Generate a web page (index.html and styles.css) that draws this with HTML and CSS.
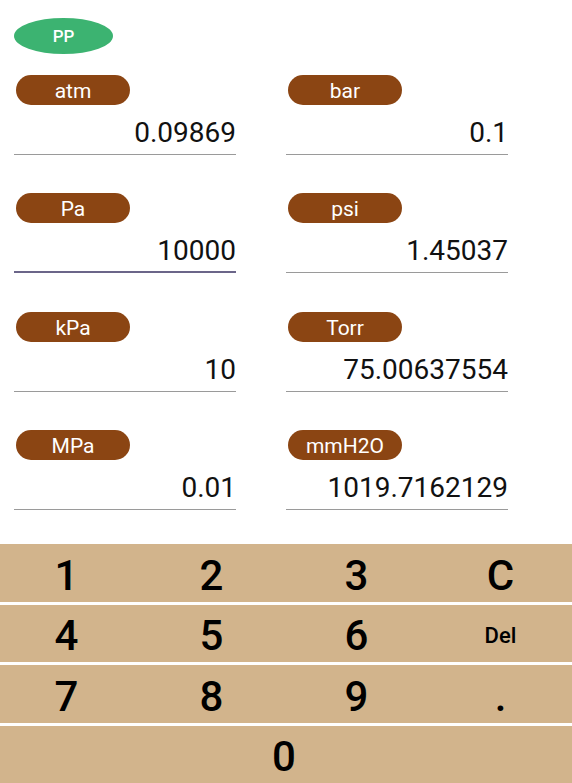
FILE: index.html
```html
<!DOCTYPE html>
<html>
<head>
    <title>Pressure Converter</title>
    <meta charset="UTF-8">
    <link rel="stylesheet" href="styles.css">
</head>
<body>
    <div class="screen">
        <button class="mode-btn">PP</button>

        <div class="fields">
            <div class="field">
                <span class="unit">atm</span>
                <div class="value">0.09869</div>
            </div>
            <div class="field">
                <span class="unit">bar</span>
                <div class="value">0.1</div>
            </div>
            <div class="field">
                <span class="unit">Pa</span>
                <div class="value focused">10000</div>
            </div>
            <div class="field">
                <span class="unit">psi</span>
                <div class="value">1.45037</div>
            </div>
            <div class="field">
                <span class="unit">kPa</span>
                <div class="value">10</div>
            </div>
            <div class="field">
                <span class="unit">Torr</span>
                <div class="value">75.00637554</div>
            </div>
            <div class="field">
                <span class="unit">MPa</span>
                <div class="value">0.01</div>
            </div>
            <div class="field">
                <span class="unit">mmH2O</span>
                <div class="value">1019.7162129</div>
            </div>
        </div>

        <div class="keypad">
            <button class="key">1</button>
            <button class="key">2</button>
            <button class="key">3</button>
            <button class="key">C</button>
            <button class="key">4</button>
            <button class="key">5</button>
            <button class="key">6</button>
            <button class="key small">Del</button>
            <button class="key">7</button>
            <button class="key">8</button>
            <button class="key">9</button>
            <button class="key">.</button>
            <button class="key wide">0</button>
        </div>
    </div>
</body>
</html>
```

FILE: styles.css
```css
body {
    font-family: Roboto, 'Liberation Sans', sans-serif;
    margin: 0;
    background-color: white;
    color: #111;
}

.screen {
    height: 783px;
    display: flex;
    flex-direction: column;
}

.mode-btn {
    align-self: flex-start;
    width: 99px;
    height: 36px;
    margin: 18px 0 21px 14px;
    background-color: #3cb371;
    color: white;
    border: none;
    border-radius: 50%;
    font-family: inherit;
    font-size: 17px;
    font-weight: 500;
    padding: 0;
}

.fields {
    display: grid;
    grid-template-columns: 222px 222px;
    column-gap: 50px;
    row-gap: 38.33px;
    padding-left: 14px;
}

.field {
    display: flex;
    flex-direction: column;
    align-items: flex-start;
}

.unit {
    margin-left: 2px;
    width: 114px;
    height: 30px;
    line-height: 32px;
    background-color: #8b4513;
    color: white;
    border-radius: 15px;
    text-align: center;
    font-size: 21px;
}

.value {
    align-self: stretch;
    height: 50px;
    box-sizing: border-box;
    padding: 12px 0 5px 0;
    text-align: right;
    font-size: 28px;
    line-height: 32px;
    border-bottom: 1px solid #9a9a9a;
}

.value.focused {
    border-bottom: 2px solid #6b6589;
}

.keypad {
    margin-top: auto;
    height: 239px;
    display: grid;
    grid-template-columns: repeat(4, 1fr);
    grid-template-rows: repeat(4, 1fr);
    row-gap: 3px;
}

.key {
    background-color: #d2b48c;
    border: none;
    padding: 5px 0 0 0;
    font-family: inherit;
    font-size: 42px;
    font-weight: 500;
    color: #000;
}

/* nudge labels to where the original buttons draw them */
.key:nth-child(4n+1) {
    padding-right: 10px;
}

.key:nth-child(4n+2) {
    padding-right: 6px;
}

.key:nth-child(4n+3) {
    padding-right: 2px;
}

.key.small {
    font-size: 22px;
}

.key.wide {
    grid-column: 1 / span 4;
    padding-right: 4px;
}
```
